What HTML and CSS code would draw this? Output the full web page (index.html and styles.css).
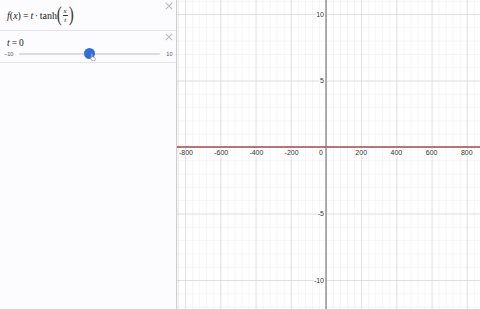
FILE: index.html
```html
<!DOCTYPE html>
<html lang="en">
<head>
  <meta charset="UTF-8" />
  <meta name="viewport" content="width=device-width, initial-scale=1.0" />
  <title>Graph</title>
  <link rel="stylesheet" href="styles.css">
</head>
<body>

  <div class="app">
    <aside class="list">
      <div class="expr">
        <div class="math">
          <i>f</i><span class="paren">(</span><i>x</i><span class="paren">)</span>
          <span class="op">=</span>
          <i>t</i><span class="op dot">·</span>tanh<span class="big">(</span><span class="frac"><i class="num">x</i><i class="den">t</i></span><span class="big">)</span>
        </div>
        <svg class="close" viewBox="0 0 10 10"><path d="M1 1L9 9M9 1L1 9" /></svg>
      </div>

      <div class="expr slider-row">
        <div class="math small"><i>t</i><span class="op">=</span>0</div>
        <div class="slider">
          <span class="bound">−10</span>
          <div class="track">
            <span class="thumb"></span>
            <svg class="hand" viewBox="0 0 10 10"><path d="M3 1.2c.5-.4 1.1 0 1.1.6v3l.6-.2c.5-.1 1 .2 1 .6l.1.2c.5-.2 1 0 1.1.5.5-.1.9.2.9.7v1.6c0 1-.8 1.6-1.8 1.6H4.7c-.6 0-1-.3-1.4-.8L1.6 6.6c-.3-.4 0-1 .5-1 .3 0 .6.1.8.4v-4.2c0-.2 0-.4.1-.6z" /></svg>
          </div>
          <span class="bound">10</span>
        </div>
        <svg class="close" viewBox="0 0 10 10"><path d="M1 1L9 9M9 1L1 9" /></svg>
      </div>
    </aside>

    <main class="graph">
      <svg class="plane" width="303" height="309">
        <defs>
          <pattern id="minor" patternUnits="userSpaceOnUse" x="149" y="147" width="7.04" height="13.3">
            <path d="M0 0V13.3M0 0H7.04" class="minor" />
          </pattern>
          <pattern id="major" patternUnits="userSpaceOnUse" x="149" y="147" width="35.2" height="66.5">
            <path d="M0 0V66.5M0 0H35.2" class="major" />
          </pattern>
        </defs>
        <rect width="303" height="309" fill="#fff" />
        <rect width="303" height="309" fill="url(#minor)" />
        <rect width="303" height="309" fill="url(#major)" />
        <line x1="149" y1="0" x2="149" y2="309" class="axis" />
        <line x1="0" y1="147" x2="303" y2="147" class="axis" />
        <line x1="0" y1="147" x2="303" y2="147" class="curve" />

        <g class="labels xl">
          <text x="9" y="155">-800</text>
          <text x="44.2" y="155">-600</text>
          <text x="79.4" y="155">-400</text>
          <text x="114.6" y="155">-200</text>
          <text x="184.2" y="155">200</text>
          <text x="219.4" y="155">400</text>
          <text x="254.6" y="155">600</text>
          <text x="289.8" y="155">800</text>
        </g>
        <g class="labels yl">
          <text x="146" y="155">0</text>
          <text x="147" y="16.5">10</text>
          <text x="147" y="83">5</text>
          <text x="147" y="216">-5</text>
          <text x="147" y="282.5">-10</text>
        </g>
      </svg>
    </main>
  </div>

</body>
</html>
```

FILE: styles.css
```css
body {
  margin: 0;
  font-family: "Liberation Sans", Arial, sans-serif;
  background: #fff;
}

.app {
  display: flex;
  width: 480px;
  height: 309px;
  overflow: hidden;
}

.list {
  width: 176px;
  flex-shrink: 0;
  background: #fcfbfd;
  border-right: 1px solid #cfcfd4;
  box-shadow: 1px 0 2px rgba(0, 0, 0, 0.08);
  position: relative;
  z-index: 1;
}

.expr {
  position: relative;
  height: 30px;
  border-bottom: 1px solid #e4e4e8;
  padding-left: 7px;
  display: flex;
  align-items: center;
}

.math {
  font-family: "Liberation Serif", "Times New Roman", serif;
  font-size: 10px;
  color: #222;
  display: flex;
  align-items: center;
  white-space: nowrap;
}

.math i {
  font-style: italic;
}

.op {
  margin: 0 2px;
}

.dot {
  margin: 0 1.5px;
}

.paren {
  font-size: 10px;
}

.big {
  font-size: 20px;
  transform: scaleX(0.75);
  line-height: 1;
  margin: 0 -1px 2px;
  color: #333;
}

.frac {
  display: flex;
  flex-direction: column;
  align-items: center;
  font-size: 7px;
  line-height: 8px;
  padding: 0 1px;
}

.frac .num {
  border-bottom: 0.6px solid #333;
  padding: 0 1px;
}

.close {
  position: absolute;
  right: 3px;
  top: 2px;
  width: 8px;
  height: 8px;
}

.close path {
  stroke: #b9b9bf;
  stroke-width: 1.3;
  fill: none;
}

.slider-row {
  flex-direction: column;
  align-items: stretch;
  justify-content: flex-start;
  padding-left: 0;
  height: 31px;
}

.math.small {
  padding: 7px 0 0 7px;
  font-size: 9.5px;
}

.slider {
  display: flex;
  align-items: center;
  gap: 6px;
  padding: 3px 0 0 4px;
  font-size: 5.5px;
  color: #555;
}

.track {
  position: relative;
  width: 141px;
  height: 2px;
  background: #dcdcdf;
  border-radius: 1px;
}

.thumb {
  position: absolute;
  left: 65px;
  top: -5px;
  width: 11px;
  height: 11px;
  border-radius: 50%;
  background: #2f6fd8;
}

.hand {
  position: absolute;
  left: 70px;
  top: 0;
  width: 8px;
  height: 8px;
}

.hand path {
  fill: #fff;
  stroke: #777;
  stroke-width: 0.8;
}

.graph {
  flex: 1;
}

.plane {
  display: block;
}

.minor {
  stroke: #ececee;
  stroke-width: 1;
  fill: none;
}

.major {
  stroke: #cbcbce;
  stroke-width: 1;
  fill: none;
}

.axis {
  stroke: #8f8f93;
  stroke-width: 1.4;
}

.curve {
  stroke: #c74440;
  stroke-width: 1.2;
}

.labels text {
  font-family: "Liberation Sans", Arial, sans-serif;
  font-size: 7px;
  fill: #333;
  stroke: #fff;
  stroke-width: 2px;
  paint-order: stroke;
}

.xl text {
  text-anchor: middle;
}

.yl text {
  text-anchor: end;
}
```
